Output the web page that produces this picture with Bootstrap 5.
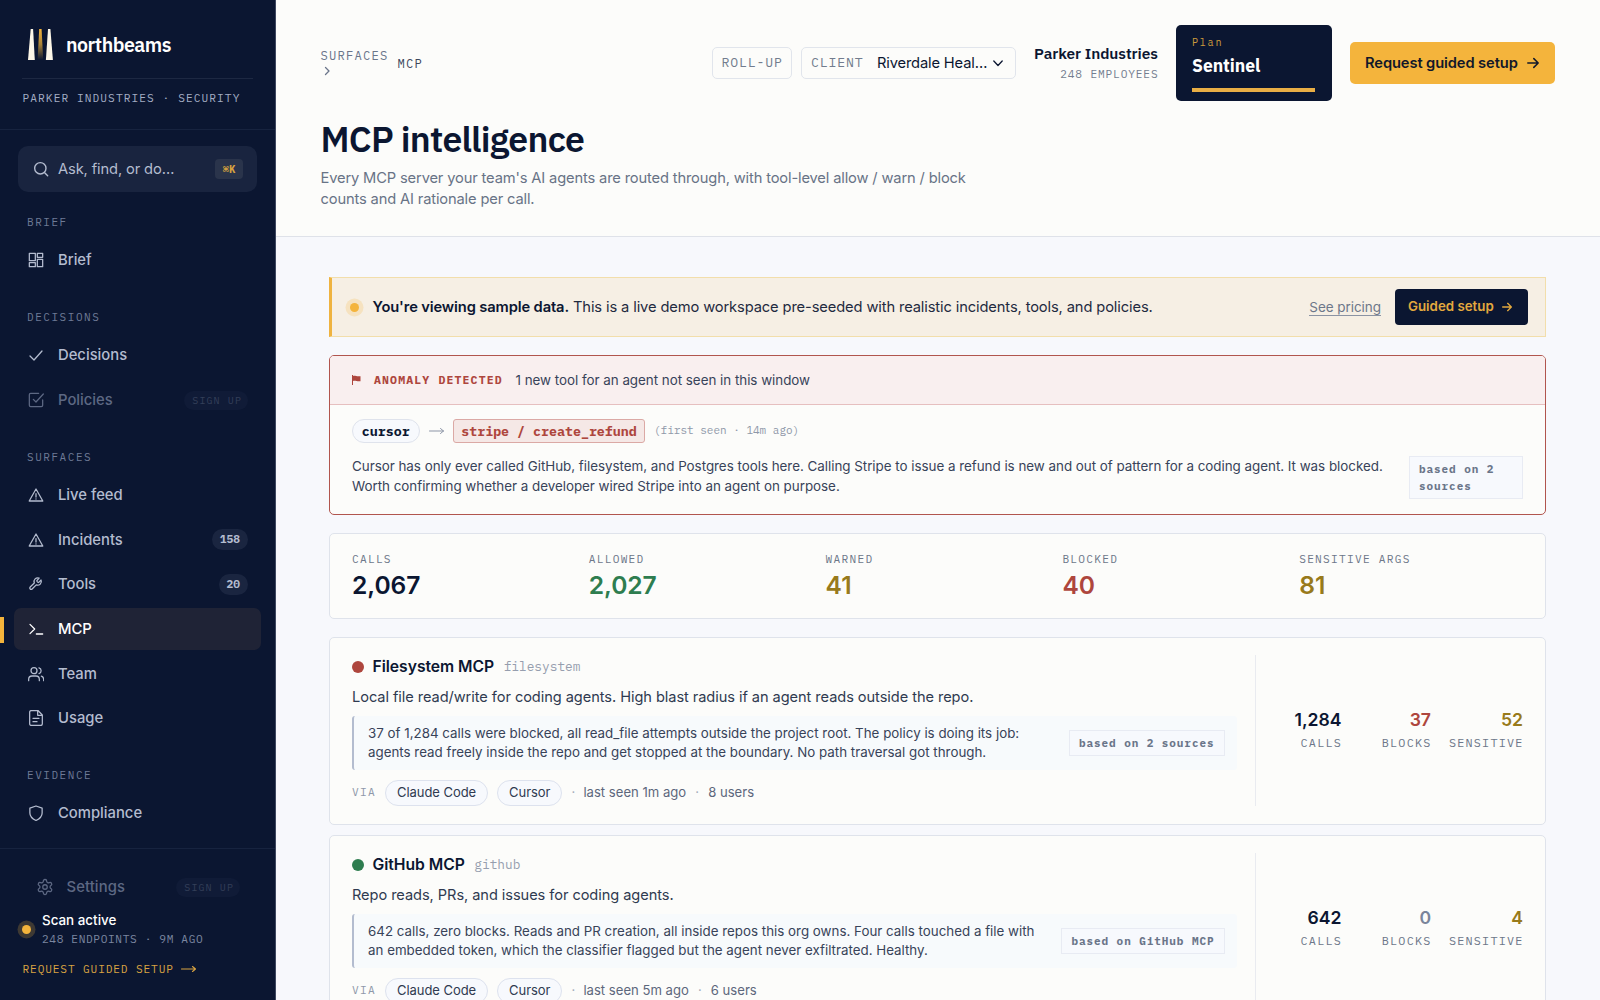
<!DOCTYPE html>
<html lang="en">
<head>
<meta charset="utf-8">
<title>northbeams · MCP intelligence</title>
<link rel="stylesheet" href="https://cdn.jsdelivr.net/npm/bootstrap@5.3.0/dist/css/bootstrap.min.css">
<style>
:root{--navy:#0b1631;--paper:#fcfcfa;--amber:#f4b43c;--red:#ae463d;--green:#2e7d4f;--gold:#987a1b;--mono:"IBM Plex Mono","Liberation Mono",monospace;--head:"IBM Plex Sans","Open Sans",sans-serif}
body{font-family:Inter,sans-serif;font-size:15px;line-height:1.5;color:#0b1631;background:#f7f8fc;height:1000px;overflow:hidden}
svg{fill:none;stroke:currentColor;stroke-width:1.6;stroke-linecap:round;stroke-linejoin:round;flex:none;display:block}
.mono{font-family:var(--mono)}
.side{width:276px;flex:none;height:1000px;background:var(--navy);color:#b4bccf;border-right:1px solid #3f4860}
.brand-area{height:130px;padding:28px 22px 0;border-bottom:1px solid #17233f}
.brand-row{height:51px;padding-left:6px;border-bottom:1px solid #1d2842;gap:12px}
.brand-name{font:600 19.6px/34px var(--head);letter-spacing:-.5px;color:#fff}
.tenant{font-size:11.2px;letter-spacing:1.07px;line-height:16px;margin-top:11px;color:#a3adc4;padding-left:.5px}
.ask{margin:16px 18px 0;height:46px;border-radius:10px;background:#19243f;padding:0 14px 0 15px}
.ask-text{font-size:14.7px;letter-spacing:-.12px;margin-left:9px}
.ask .key{background:#2a344b;color:#d6a23f;font:700 10.5px/20px var(--mono);width:28px;text-align:center;border-radius:4px}
.side-label{font:11px/16px var(--mono);letter-spacing:1.55px;color:#6e7a96;padding-left:27px;height:16px}
.item{height:42.7px;margin:0 14px 2px 14px;padding:0 13px 0 14px;border-radius:7px;font-weight:500;font-size:14.8px;gap:14px}
.item svg{width:16px;height:16px;stroke-width:1.9}
.item.on{background:#1f2336;color:#fff;position:relative}
.item.on:before{content:"";position:absolute;left:-14px;top:9px;width:4px;height:26px;background:var(--amber)}
.item.off{color:#5d6883}
.count{font:700 11.2px/21px var(--mono);background:#1a2540;border-radius:11px;padding:0 8px}
.signup{font:10px/19px var(--mono);letter-spacing:1.1px;color:#343f59;background:#101b37;border-radius:10px;padding:0 6px 0 8px}
.side-foot{border-top:1px solid #17233f;margin-top:11.5px;padding-top:17px}
.pulse{width:9px;height:9px;border-radius:50%;background:var(--amber);box-shadow:0 0 0 4.5px #f4b43c38;flex:none}
.top{height:237px;background:var(--paper);border-bottom:1px solid #dfe2e9;padding:25px 45px 0 44.5px}
.crumb{font-size:12.2px;line-height:16px;letter-spacing:1.2px;color:#6a758a}
.ctl{height:32px;border:1.5px solid #e1e5ec;border-radius:5px}
.ctl .mono{font-size:13.2px;letter-spacing:.83px;color:#727c8e}
.plan{width:156px;height:76px;border-radius:5px;background:var(--navy);padding:10px 16.5px 0;color:#fff}
.cta{background:var(--amber);border-radius:5px;height:42px;width:205.5px;font-weight:600;font-size:14.7px;letter-spacing:-.1px;padding-left:15.5px;gap:9px;color:#12182a}
h1{font:600 35.6px/50px var(--head);letter-spacing:-.72px;margin:12.5px 0 0}
.sub{font-size:14.7px;letter-spacing:-.15px;line-height:21.8px;color:#687386;margin:4px 0 0;width:680px}
.wrap{padding:40px 54px 0 53px}
.demo{height:60px;border:1.5px solid #f2deab;border-left:3px solid #efb340;background:#f6efe4;padding:0 17.5px 0 18px}
.demo-btn{background:var(--navy);color:#e3a93e;border-radius:4px;height:36px;width:133px;font-weight:600;font-size:13.3px;padding-left:13.5px;gap:8px}
.pricing{font-size:13.5px;letter-spacing:-.05px;line-height:16px;border-bottom:1px solid #8b93a3;color:#6d7789;margin-right:13.5px}
.panel{background:var(--paper);border:1.5px solid #dfe3eb;border-radius:5px}
.alarm{border-color:#b1554e;margin-top:18px;height:159.5px;overflow:hidden}
.alarm-head{height:49px;background:#f9efef;border-bottom:1px solid #e6bfbf;padding-left:22px}
.agent{font:700 13.3px/22px var(--mono);border:1px solid #dfe3ec;background:#f7f9fd;border-radius:12px;width:67.5px;text-align:center}
.tool{font:700 13.3px/22px var(--mono);border:1px solid #dba9a5;background:#f5e8e6;color:var(--red);border-radius:3px;width:192px;text-align:center}
.body2{font-size:13.4px;line-height:20px;letter-spacing:-.025px;color:#384359}
.src{font:700 11px/16.5px var(--mono);letter-spacing:.93px;color:#6a7589;background:#f7f9fd;border:1px solid #e8ebf3;padding:4px 9px}
.kpis{margin-top:18px;height:86px;padding:17.5px 9px 0 22px}
.cap-s{font:11.2px/17px var(--mono);letter-spacing:1.25px;color:#6d7789}
.num{font-size:24.6px;font-weight:600;line-height:34px;letter-spacing:-.05px}
.srv{height:188px;padding:17.5px 22px 0 22px;margin-bottom:10px}
.srv-main{width:885px}
.dotx{width:12px;height:12px;border-radius:50%}
.srv-name{font-weight:600;font-size:15.7px;letter-spacing:-.03px;margin:0 9.5px 0 8.5px}
.srv-desc{font-size:14.6px;letter-spacing:-.06px;line-height:22px;margin-top:8px;color:#2f3a50}
.why{height:54px;background:#f7fafc;border-left:2px solid #b3bccf;border-radius:3px;padding:0 12.5px 0 14px;margin-top:8px}
.why p{font-size:13.35px;line-height:19px;color:#384359;width:675px}
.via{margin-top:9.5px;font-size:13.1px;color:#5c677c}
.chip{border:1.5px solid #dde2ee;background:#f7f9fd;border-radius:13px;height:26px;line-height:23px;font-size:13px;letter-spacing:-.05px;padding:0 11px;color:#2f3a50}
.srv-nums{border-left:1px solid #e9ebf0;width:268px;height:151px;gap:18px}
.srv-nums>div{min-width:71.5px;text-align:right;margin-top:-3px}
.srv-nums b{font-weight:600;font-size:17.6px;line-height:26px;display:block}
.srv-nums .cap-s{font-size:11.8px;letter-spacing:1.2px;line-height:18px;margin-right:-.5px;margin-top:1px}
.t-red{color:var(--red)}.t-green{color:var(--green)}.t-gold{color:var(--gold)}
</style>
</head>
<body class="d-flex">
<aside class="side d-flex flex-column">
  <div class="brand-area">
    <div class="brand-row d-flex">
      <svg width="26" height="33" viewBox="0 0 26 33" style="stroke:none"><defs><linearGradient id="beam" x1="0" y1="0" x2="0" y2="1"><stop offset="0" stop-color="#f4b43c"/><stop offset=".5" stop-color="#a88237"/><stop offset="1" stop-color="#0b1631"/></linearGradient></defs><path d="M2.700 1h2.400L6.800 32H0z" fill="#fdf7e8"/><path d="M11.200 1h2.400l1.600 31H9.600z" fill="url(#beam)"/><path d="M20 1h2.400L24.900 32h-7z" fill="#fdf7e8"/></svg>
      <span class="brand-name">northbeams</span>
    </div>
    <div class="tenant mono text-nowrap">PARKER INDUSTRIES · SECURITY</div>
  </div>
  <div class="ask d-flex align-items-center">
    <svg width="16" height="16" viewBox="0 0 24 24" style="stroke-width:2.1"><circle cx="11" cy="11" r="8.5"/><path d="m17.5 17.5 4.500 4.500"/></svg>
    <span class="ask-text me-auto">Ask, find, or do…</span><span class="key">⌘K</span>
  </div>
  <div class="side-label" style="margin-top:21.5px">BRIEF</div>
  <nav style="padding-top:9.5px">
    <div class="item d-flex align-items-center"><svg viewBox="0 0 24 24"><path d="M2 2h9v11H2zM14 2h8v6h-8zM14 11h8v11h-8zM2 16h9v6H2z"/></svg>Brief</div>
  </nav>
  <div class="side-label" style="margin-top:25px">DECISIONS</div>
  <nav style="padding-top:9.5px">
    <div class="item d-flex align-items-center"><svg viewBox="0 0 24 24"><path d="m3 12 6 6L21 4.500"/></svg>Decisions</div>
    <div class="item off d-flex align-items-center"><svg viewBox="0 0 24 24"><path d="m8 11 4 4L23 3M22 12v8a2 2 0 0 1-2 2H4a2 2 0 0 1-2-2V4a2 2 0 0 1 2-2h12"/></svg><span class="me-auto">Policies</span><span class="signup">SIGN UP</span></div>
  </nav>
  <div class="side-label" style="margin-top:25px">SURFACES</div>
  <nav style="padding-top:9px">
    <div class="item d-flex align-items-center"><svg viewBox="0 0 24 24"><path d="M12 3 1.8 21h20.4zM12 10v5M12 17.8v.2"/></svg>Live feed</div>
    <div class="item d-flex align-items-center"><svg viewBox="0 0 24 24"><path d="M12 3 1.8 21h20.4zM12 10v5M12 17.8v.2"/></svg><span class="me-auto">Incidents</span><span class="count">158</span></div>
    <div class="item d-flex align-items-center"><svg viewBox="0 0 24 24"><path d="M13.5 6.8a1 1 0 0 0 0 1.3l1.4 1.4a1 1 0 0 0 1.3 0l3.4-3.4a5.5 5.5 0 0 1-7.200 7.200l-6.200 6.200a2 2 0 0 1-2.900-2.900l6.200-6.200a5.500 5.500 0 0 1 7.200-7.200z"/></svg><span class="me-auto">Tools</span><span class="count">20</span></div>
    <div class="item on d-flex align-items-center"><svg viewBox="0 0 24 24"><path d="m3 5 7 7-7 7M12.500 19.500H22"/></svg>MCP</div>
    <div class="item d-flex align-items-center"><svg viewBox="0 0 24 24"><circle cx="9" cy="7" r="4.500"/><path d="M1 22v-2a5 5 0 0 1 5-5h6a5 5 0 0 1 5 5v2M23.500 22v-2a5 5 0 0 0-3.500-4.700M16.500 2.700a4.500 4.500 0 0 1 0 8.600"/></svg>Team</div>
    <div class="item d-flex align-items-center"><svg viewBox="0 0 24 24"><path d="M15 .8H5a2.500 2.500 0 0 0-2.500 2.500v17.400A2.500 2.500 0 0 0 5 23.200h14a2.500 2.500 0 0 0 2.500-2.500V7.500zM14.500 1v7h7M7.500 12.500h9M7.500 17.500h6"/></svg>Usage</div>
  </nav>
  <div class="side-label" style="margin-top:25px">EVIDENCE</div>
  <nav style="padding-top:9px">
    <div class="item d-flex align-items-center"><svg viewBox="0 0 24 24"><path d="M12 1.500 2.800 4.800V12c0 6.500 5.500 9.500 9.200 11.200 3.700-1.700 9.200-4.700 9.200-11.200V4.800z"/></svg>Compliance</div>
  </nav>
  <div class="side-foot">
    <div class="item off d-flex align-items-center" style="margin:0 22px"><svg viewBox="0 0 24 24" style="width:18px;height:18px;margin-right:-1px;margin-left:-.5px;stroke-width:1.700"><path d="M12.200 2h-.4a2 2 0 0 0-2 2v.2a2 2 0 0 1-1 1.700l-.4.3a2 2 0 0 1-2 0l-.2-.1a2 2 0 0 0-2.700.7l-.2.400a2 2 0 0 0 .7 2.700l.2.100a2 2 0 0 1 1 1.700v.500a2 2 0 0 1-1 1.800l-.2.100a2 2 0 0 0-.7 2.700l.2.400a2 2 0 0 0 2.700.700l.2-.1a2 2 0 0 1 2 0l.4.300a2 2 0 0 1 1 1.700v.200a2 2 0 0 0 2 2h.4a2 2 0 0 0 2-2v-.2a2 2 0 0 1 1-1.700l.4-.3a2 2 0 0 1 2 0l.2.100a2 2 0 0 0 2.700-.7l.2-.4a2 2 0 0 0-.7-2.700l-.2-.1a2 2 0 0 1-1-1.800v-.5a2 2 0 0 1 1-1.700l.2-.1a2 2 0 0 0 .7-2.700l-.2-.4a2 2 0 0 0-2.700-.7l-.2.100a2 2 0 0 1-2 0l-.4-.3a2 2 0 0 1-1-1.700V4a2 2 0 0 0-2-2z"/><circle cx="12" cy="12" r="3"/></svg><span class="me-auto" style="letter-spacing:.1px">Settings</span><span class="signup">SIGN UP</span></div>
    <div class="d-flex align-items-center" style="padding-left:22px;gap:11px;margin-top:2px">
      <span class="pulse"></span>
      <div><div class="text-white" style="font-size:13.4px;line-height:19px;font-weight:500">Scan active</div><div class="mono text-nowrap" style="font-size:11.2px;line-height:18px;letter-spacing:.62px;color:#7b86a0">248 ENDPOINTS · 9M AGO</div></div>
    </div>
    <div class="mono text-nowrap d-flex align-items-center" style="font-size:11.2px;letter-spacing:.85px;line-height:16px;color:#d9a342;padding-left:22.5px;margin-top:13px;gap:7px">REQUEST GUIDED SETUP <svg width="15" height="8" viewBox="0 0 15 8" style="stroke-width:1.1"><path d="M.5 4h14M11.500 1.500 14.500 4l-3 2.500"/></svg></div>
  </div>
</aside>

<main class="flex-grow-1" style="min-width:0">
  <header class="top">
    <div class="d-flex align-items-center" style="height:76px">
      <div class="crumb mono" style="width:77px">SURFACES<svg width="7" height="10" viewBox="0 0 7 10" style="margin:3px 0 3px 3px;stroke-width:1.300"><path d="m1.500 1.500 3.500 3.500-3.500 3.500"/></svg></div>
      <div class="crumb mono me-auto" style="color:#3d475c">MCP</div>
      <div class="ctl d-flex align-items-center" style="width:80.500px;padding-left:9px;margin-right:9px"><span class="mono">ROLL-UP</span></div>
      <div class="ctl d-flex align-items-center" style="width:215px;padding-left:9px;margin-right:17px"><span class="mono" style="width:66px">CLIENT</span><span class="text-nowrap" style="width:115.500px;font-size:14.700px;letter-spacing:-.15px">Riverdale Heal…</span><svg width="10" height="7" viewBox="0 0 10 7" style="stroke-width:1.300"><path d="m.8 1 4.200 4.500L9.200 1"/></svg></div>
      <div class="text-end text-nowrap" style="width:125px;margin-right:17.500px;padding-top:1px"><div style="font:600 15.400px/22px var(--head);letter-spacing:-.04px">Parker Industries</div><div class="mono" style="font-size:11.200px;line-height:21px;letter-spacing:.85px;margin-right:-.5px;color:#747e90">248 EMPLOYEES</div></div>
      <div class="plan" style="margin-right:18px"><div class="mono" style="font-size:10.200px;line-height:16px;letter-spacing:1.700px;color:#cf9c3c">Plan</div><div style="font:700 17.600px/28px var(--head);letter-spacing:-.08px;margin-top:1px">Sentinel</div><div style="height:4px;background:#e9ae45;margin-top:8px"></div></div>
      <div class="cta d-flex align-items-center text-nowrap">Request guided setup<svg width="12" height="12" viewBox="0 0 12 12" style="stroke-width:1.500"><path d="M.8 6h10.400M6.800 1.600 11.200 6l-4.400 4.400"/></svg></div>
    </div>
    <h1>MCP intelligence</h1>
    <p class="sub text-nowrap">Every MCP server your team's AI agents are routed through, with tool-level allow / warn / block<br>counts and AI rationale per call.</p>
  </header>

  <div class="wrap">
    <div class="demo d-flex align-items-center text-nowrap">
      <span class="pulse"></span>
      <div class="me-auto" style="margin-left:13.500px;padding-top:1px;font-size:14.700px;letter-spacing:-.12px;color:#1f2a40"><span style="font-weight:600;color:#0b1631">You're viewing sample data.</span> This is a live demo workspace pre-seeded with realistic incidents, tools, and policies.</div>
      <span class="pricing">See pricing</span>
      <div class="demo-btn d-flex align-items-center">Guided setup<svg width="10" height="10" viewBox="0 0 12 12"><path d="M.8 6h10.400M6.800 1.600 11.200 6l-4.400 4.400"/></svg></div>
    </div>

    <section class="panel alarm">
      <div class="alarm-head d-flex align-items-center">
        <svg width="9" height="10" viewBox="0 0 9 10" style="stroke:none;color:#ae463d"><path d="M0 0h1v1c2-.8 3.500.8 7.500.2v5C5 6.800 3.500 5.200 1 6v4H0z" fill="currentColor"/></svg>
        <span class="mono t-red fw-bold" style="font-size:11.500px;letter-spacing:1.150px;margin-left:13px;width:141.500px">ANOMALY DETECTED</span>
        <span class="body2">1 new tool for an agent not seen in this window</span>
      </div>
      <div style="padding:13.500px 22px 0 22px">
        <div class="d-flex align-items-center">
          <span class="agent">cursor</span>
          <svg width="15" height="8" viewBox="0 0 15 8" style="stroke-width:1;margin:0 9px 0 9.500px;color:#8c95a6"><path d="M.5 4h14M11.500 1.500 14.500 4l-3 2.500"/></svg>
          <span class="tool">stripe / create_refund</span>
          <span class="mono" style="font-size:11px;color:#8f98a9;margin-left:9px">(first seen · 14m ago)</span>
        </div>
        <div class="d-flex justify-content-between" style="margin-top:13.500px">
          <div class="body2 text-nowrap">Cursor has only ever called GitHub, filesystem, and Postgres tools here. Calling Stripe to issue a refund is new and out of pattern for a coding agent. It was blocked.<br>Worth confirming whether a developer wired Stripe into an agent on purpose.</div>
          <div class="src" style="width:114px">based on 2 sources</div>
        </div>
      </div>
    </section>

    <section class="panel kpis d-flex">
      <div class="col"><div class="cap-s">CALLS</div><div class="num">2,067</div></div>
      <div class="col"><div class="cap-s">ALLOWED</div><div class="num t-green">2,027</div></div>
      <div class="col"><div class="cap-s">WARNED</div><div class="num t-gold">41</div></div>
      <div class="col"><div class="cap-s">BLOCKED</div><div class="num t-red">40</div></div>
      <div class="col"><div class="cap-s">SENSITIVE ARGS</div><div class="num t-gold">81</div></div>
    </section>

    <article class="panel srv d-flex justify-content-between" style="margin-top:18px">
      <div class="srv-main">
        <div class="d-flex align-items-center" style="height:23px"><span class="dotx" style="background:var(--red)"></span><span class="srv-name">Filesystem MCP</span><span class="mono" style="font-size:12.800px;color:#969eae">filesystem</span></div>
        <div class="srv-desc">Local file read/write for coding agents. High blast radius if an agent reads outside the repo.</div>
        <div class="why d-flex align-items-center justify-content-between"><p class="mb-0 text-nowrap">37 of 1,284 calls were blocked, all read_file attempts outside the project root. The policy is doing its job:<br>agents read freely inside the repo and get stopped at the boundary. No path traversal got through.</p><span class="src text-nowrap">based on 2 sources</span></div>
        <div class="via d-flex align-items-center"><span class="cap-s" style="width:33px;color:#8f98a9">VIA</span><span class="chip">Claude Code</span><span class="chip" style="margin:0 9px">Cursor</span><span style="width:12px;color:#a5adbb">·</span><span>last seen 1m ago</span><span class="text-center" style="width:22px;color:#a5adbb">·</span><span>8 users</span></div>
      </div>
      <div class="srv-nums d-flex align-items-center justify-content-end">
        <div><b>1,284</b><div class="cap-s">CALLS</div></div>
        <div><b class="t-red">37</b><div class="cap-s">BLOCKS</div></div>
        <div><b class="t-gold">52</b><div class="cap-s">SENSITIVE</div></div>
      </div>
    </article>

    <article class="panel srv d-flex justify-content-between">
      <div class="srv-main">
        <div class="d-flex align-items-center" style="height:23px"><span class="dotx" style="background:var(--green)"></span><span class="srv-name">GitHub MCP</span><span class="mono" style="font-size:12.800px;color:#969eae">github</span></div>
        <div class="srv-desc">Repo reads, PRs, and issues for coding agents.</div>
        <div class="why d-flex align-items-center justify-content-between"><p class="mb-0 text-nowrap">642 calls, zero blocks. Reads and PR creation, all inside repos this org owns. Four calls touched a file with<br>an embedded token, which the classifier flagged but the agent never exfiltrated. Healthy.</p><span class="src text-nowrap">based on GitHub MCP</span></div>
        <div class="via d-flex align-items-center"><span class="cap-s" style="width:33px;color:#8f98a9">VIA</span><span class="chip">Claude Code</span><span class="chip" style="margin:0 9px">Cursor</span><span style="width:12px;color:#a5adbb">·</span><span>last seen 5m ago</span><span class="text-center" style="width:22px;color:#a5adbb">·</span><span>6 users</span></div>
      </div>
      <div class="srv-nums d-flex align-items-center justify-content-end">
        <div><b>642</b><div class="cap-s">CALLS</div></div>
        <div><b style="color:#7a859b">0</b><div class="cap-s">BLOCKS</div></div>
        <div><b class="t-gold">4</b><div class="cap-s">SENSITIVE</div></div>
      </div>
    </article>
  </div>
</main>
<script src="https://cdn.jsdelivr.net/npm/bootstrap@5.3.0/dist/js/bootstrap.bundle.min.js"></script>
</body>
</html>
